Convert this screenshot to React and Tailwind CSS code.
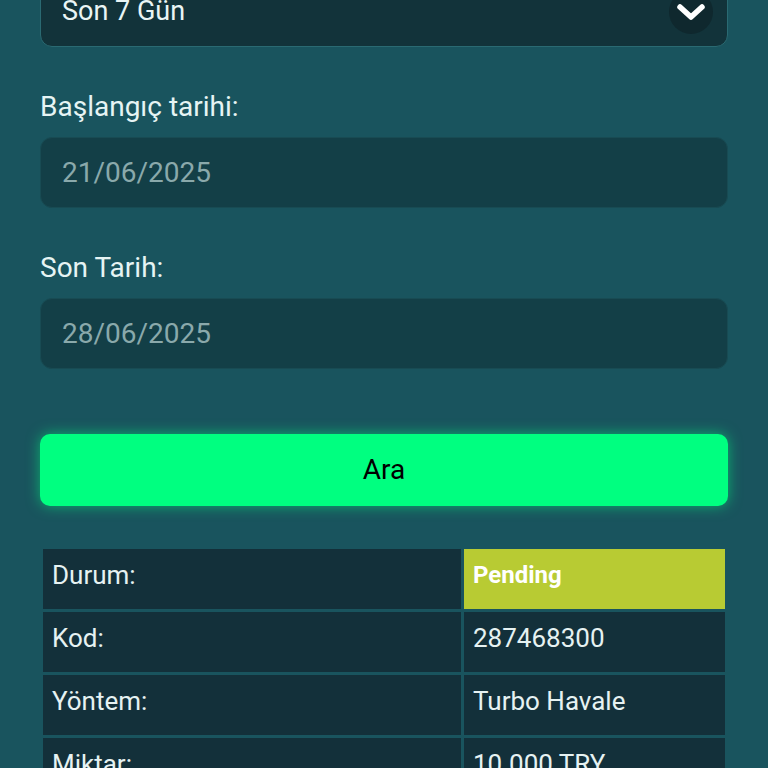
import React from "react";

const rows = [
  { label: "Durum:", value: "Pending", status: true },
  { label: "Kod:", value: "287468300" },
  { label: "Yöntem:", value: "Turbo Havale" },
  { label: "Miktar:", value: "10.000 TRY" },
];

const DateField = ({ label, value }) => (
  <div>
    <label className="block mt-[44px] mb-[14px] h-[32px] leading-[32px] text-[28px] text-[#e6f4f4]">
      {label}
    </label>
    <div className="h-[71px] flex items-center px-[21px] rounded-xl bg-[#133f47] border border-[#184b53] text-[28px] text-[#8aa9ab]">
      {value}
    </div>
  </div>
);

const App = () => {
  return (
    <div
      className="min-h-screen h-[768px] overflow-hidden bg-[#19545e] px-[40px]"
      style={{ fontFamily: "Roboto, 'Liberation Sans', sans-serif" }}
    >
      <div className="-mt-[24px]">
        <div className="h-[71px] flex items-center justify-between pl-[21px] pr-[14px] rounded-xl bg-[#12333a] border border-[#2a6a72] text-[27px] text-[#e9f5f5]">
          <span>Son 7 Gün</span>
          <span className="w-[44px] h-[44px] rounded-full bg-[#0f282e] flex items-center justify-center">
            <svg width="30" height="20" viewBox="0 0 30 20" fill="none">
              <path
                d="M4 5 L15 15 L26 5"
                stroke="white"
                strokeWidth="5.5"
                strokeLinecap="round"
                strokeLinejoin="round"
              />
            </svg>
          </span>
        </div>

        <DateField label="Başlangıç tarihi:" value="21/06/2025" />
        <DateField label="Son Tarih:" value="28/06/2025" />

        <button className="mt-[65px] w-full h-[72px] rounded-[10px] bg-[#00ff80] text-[28px] text-black shadow-[0_0_14px_rgba(0,255,128,0.55)]">
          Ara
        </button>

        <table className="mt-[40px] w-full border-separate border-spacing-[3px] text-[26px] text-[#e6f2f2]">
          <tbody>
            {rows.map((row) => (
              <tr key={row.label}>
                <td className="w-[418px] h-[60px] align-top pt-[11px] px-[9px] leading-[30px] bg-[#13303a]">
                  {row.label}
                </td>
                <td
                  className={
                    row.status
                      ? "h-[60px] align-top pt-[11px] px-[9px] leading-[30px] bg-[#b8cb33] font-bold text-[24px] text-white"
                      : "h-[60px] align-top pt-[11px] px-[9px] leading-[30px] bg-[#13303a]"
                  }
                >
                  {row.value}
                </td>
              </tr>
            ))}
          </tbody>
        </table>
      </div>
    </div>
  );
};

export default App;
